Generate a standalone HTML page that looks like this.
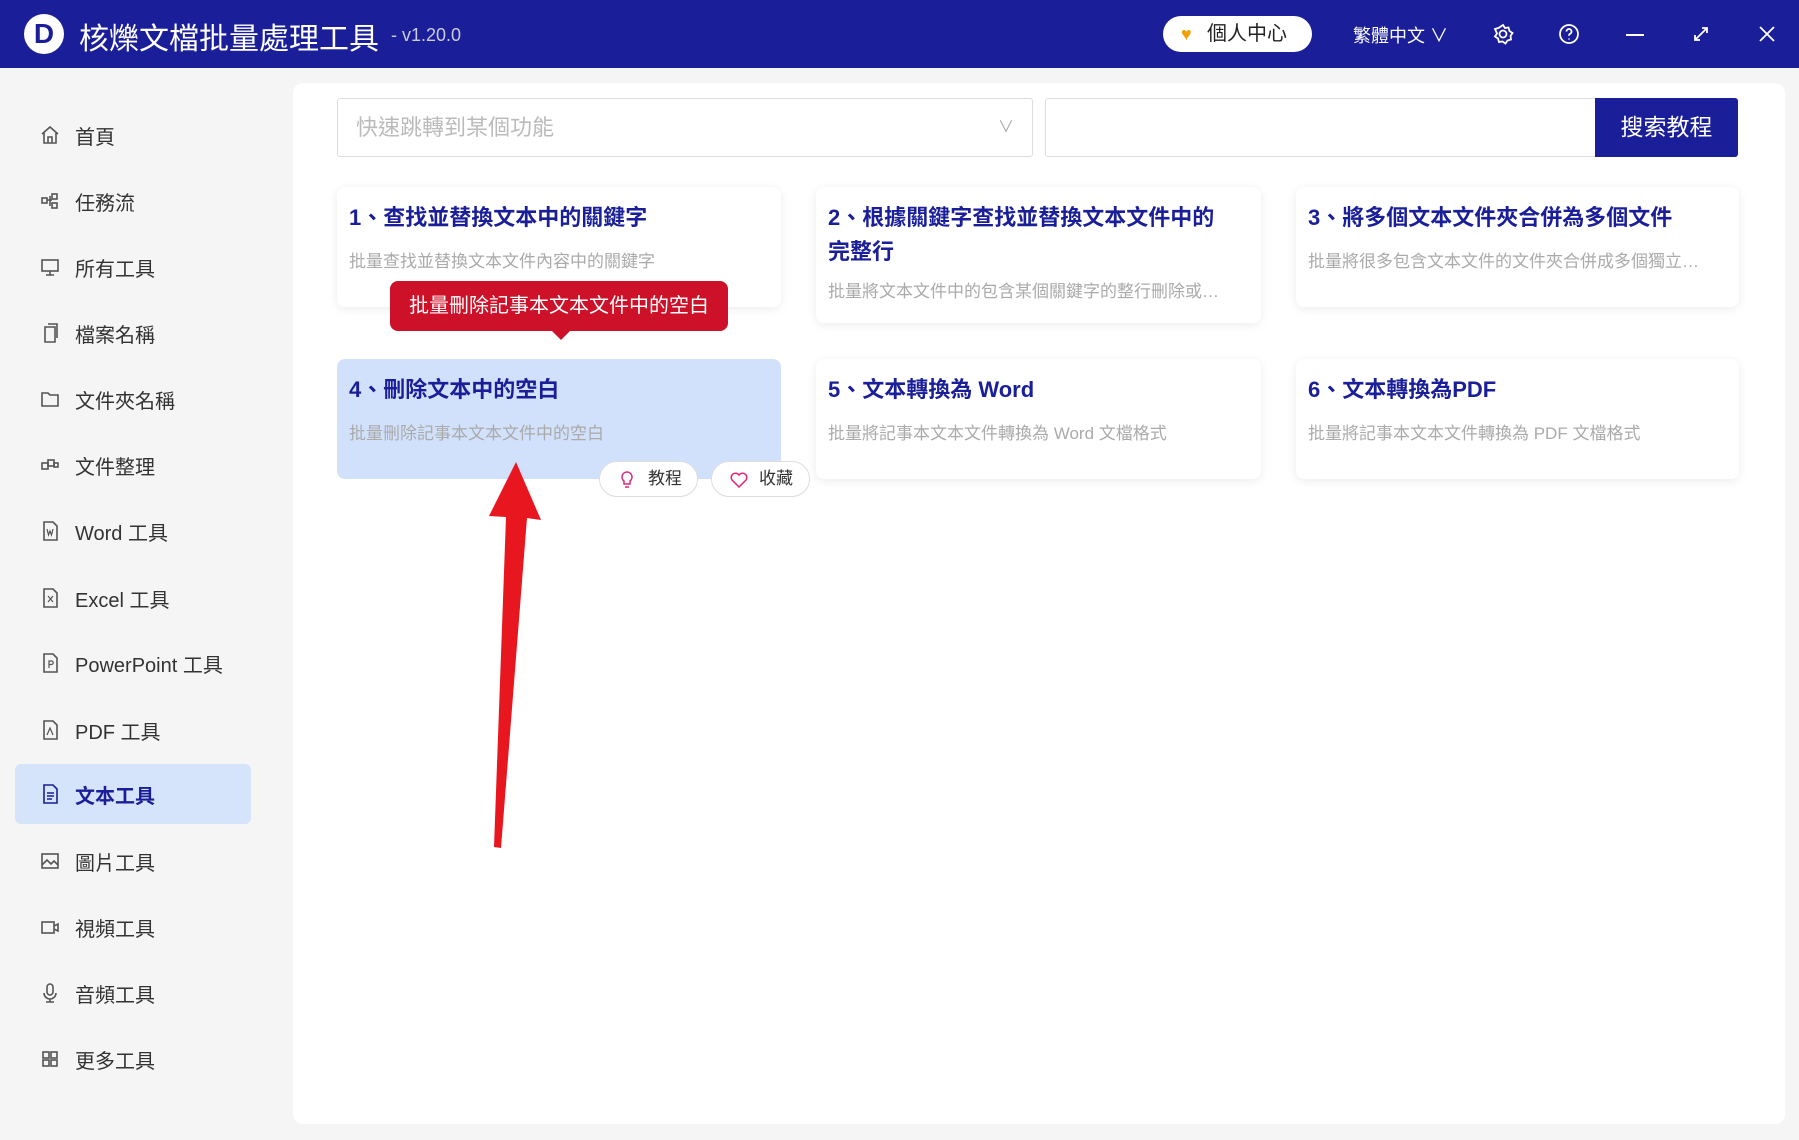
<!DOCTYPE html>
<html><head><meta charset="utf-8"><style>
*{margin:0;padding:0;box-sizing:border-box}
body{width:1799px;height:1140px;overflow:hidden;background:#f5f5f5;font-family:"Liberation Sans","Noto Sans CJK TC",sans-serif;position:relative}
.hdr{position:absolute;left:0;top:0;width:1799px;height:68px;background:#1a1e98;color:#fff}
.abs{position:absolute}
.side div.it{position:absolute;left:15px;width:236px;height:60px;display:flex;align-items:center;font-size:20px;color:#333}
.side div.it svg{position:absolute;left:24px}
.side div.it span{position:absolute;left:60px}
.panel{position:absolute;left:293px;top:83px;width:1492px;height:1041px;background:#fff;border-radius:10px}
.card{position:absolute;background:#fff;border-radius:8px;box-shadow:0 2px 10px rgba(0,0,0,.08);padding:14px 24px 14px 12px}
.card h3{font-size:22px;color:#1a1e98;font-weight:bold;line-height:34px}
.card p{font-size:17px;color:#aaa;margin-top:12px;white-space:nowrap;overflow:hidden;text-overflow:ellipsis}
</style></head><body>
<div class="hdr">
 <div class="abs" style="left:24px;top:14px;width:40px;height:40px;border-radius:50%;background:#fff;color:#1a1e98;font-weight:bold;font-size:28px;text-align:center;line-height:40px">D</div>
 <div class="abs" style="left:79px;top:14px;font-size:30px">核爍文檔批量處理工具</div>
 <div class="abs" style="left:391px;top:25px;font-size:18px;color:#ccd">- v1.20.0</div>
 <div class="abs" style="left:1163px;top:16px;width:149px;height:36px;border-radius:18px;background:#fff;color:#222;font-size:20px;line-height:36px;padding-left:44px"><span style="position:absolute;left:18px;color:#f0a000;font-size:18px">♥</span>個人中心</div>
 <div class="abs" style="left:1353px;top:22px;font-size:18px">繁體中文 ∨</div>
 <svg class="abs" style="left:1492px;top:23px" width="22" height="22" viewBox="0 0 22 22" fill="none" stroke="#fff" stroke-width="1.8"><circle cx="11" cy="11" r="3.5"/><path d="M11 2l2 3 3.5-.5 1 3.5 3 2-2 3 .5 3.5-3.5 1-2 3-3-2-3.5.5-1-3.5-3-2 2-3L3 6l3.5-1z"/></svg>
 <svg class="abs" style="left:1558px;top:23px" width="22" height="22" viewBox="0 0 22 22" fill="none" stroke="#fff" stroke-width="1.8"><circle cx="11" cy="11" r="9"/><path d="M8.5 8.5a2.5 2.5 0 1 1 3.5 2.3c-.8.4-1 1-1 2M11 15.5v1"/></svg>
 <div class="abs" style="left:1626px;top:34px;width:18px;height:2px;background:#fff"></div>
 <svg class="abs" style="left:1692px;top:25px" width="18" height="18" viewBox="0 0 18 18" stroke="#fff" stroke-width="1.8" fill="none"><path d="M3 15l12-12M10 3h5v5M3 10v5h5"/></svg>
 <svg class="abs" style="left:1758px;top:25px" width="18" height="18" viewBox="0 0 18 18" stroke="#fff" stroke-width="1.8"><path d="M2 2l14 14M16 2L2 16"/></svg>
</div>
<div class="side">
 <div class="it" style="top:105px"><svg width="22" height="22" viewBox="0 0 22 22" fill="none" stroke="#555" stroke-width="1.6"><path d="M3 10l8-7 8 7M5 8v11h12V8M9 19v-6h4v6"/></svg><span>首頁</span></div>
 <div class="it" style="top:171px"><svg width="22" height="22" viewBox="0 0 22 22" fill="none" stroke="#555" stroke-width="1.6"><rect x="3" y="8" width="5" height="5"/><rect x="13" y="4" width="5" height="5"/><rect x="13" y="13" width="5" height="5"/><path d="M8 10h5M11 6v10"/></svg><span>任務流</span></div>
 <div class="it" style="top:237px"><svg width="22" height="22" viewBox="0 0 22 22" fill="none" stroke="#555" stroke-width="1.6"><rect x="3" y="4" width="16" height="11"/><path d="M11 15v4M7 19h8"/></svg><span>所有工具</span></div>
 <div class="it" style="top:303px"><svg width="22" height="22" viewBox="0 0 22 22" fill="none" stroke="#555" stroke-width="1.6"><path d="M6 5h10v15H6zM9 2h9v14"/></svg><span>檔案名稱</span></div>
 <div class="it" style="top:369px"><svg width="22" height="22" viewBox="0 0 22 22" fill="none" stroke="#555" stroke-width="1.6"><path d="M3 5h6l2 2h8v11H3z"/></svg><span>文件夾名稱</span></div>
 <div class="it" style="top:435px"><svg width="22" height="22" viewBox="0 0 22 22" fill="none" stroke="#555" stroke-width="1.6"><rect x="3" y="9" width="6" height="6"/><rect x="9" y="6" width="6" height="6"/><rect x="15" y="9" width="4" height="4"/></svg><span>文件整理</span></div>
 <div class="it" style="top:501px"><svg width="22" height="22" viewBox="0 0 22 22" fill="none" stroke="#555" stroke-width="1.6"><path d="M5 2h9l4 4v14H5z"/><path d="M8 9l1.5 6 1.5-4 1.5 4 1.5-6" stroke-width="1.2"/></svg><span>Word 工具</span></div>
 <div class="it" style="top:568px"><svg width="22" height="22" viewBox="0 0 22 22" fill="none" stroke="#555" stroke-width="1.6"><path d="M5 2h9l4 4v14H5z"/><path d="M9 9l5 6M14 9l-5 6" stroke-width="1.2"/></svg><span>Excel 工具</span></div>
 <div class="it" style="top:633px"><svg width="22" height="22" viewBox="0 0 22 22" fill="none" stroke="#555" stroke-width="1.6"><path d="M5 2h9l4 4v14H5z"/><path d="M10 16V9h2.5a1.7 1.7 0 0 1 0 3.5H10" stroke-width="1.2"/></svg><span>PowerPoint 工具</span></div>
 <div class="it" style="top:700px"><svg width="22" height="22" viewBox="0 0 22 22" fill="none" stroke="#555" stroke-width="1.6"><path d="M5 2h9l4 4v14H5z"/><path d="M8 16l3-7 3 7" stroke-width="1.2"/></svg><span>PDF 工具</span></div>
 <div class="it" style="top:764px;background:#d5e3fb;border-radius:6px;color:#1a1e98;font-weight:bold"><svg width="22" height="22" viewBox="0 0 22 22" fill="none" stroke="#1a1e98" stroke-width="1.6"><path d="M5 2h9l4 4v14H5z"/><path d="M8 10h7M8 13h7M8 16h5"/></svg><span>文本工具</span></div>
 <div class="it" style="top:831px"><svg width="22" height="22" viewBox="0 0 22 22" fill="none" stroke="#555" stroke-width="1.6"><rect x="3" y="4" width="16" height="14"/><path d="M3 15l5-5 4 4 3-3 4 4"/></svg><span>圖片工具</span></div>
 <div class="it" style="top:897px"><svg width="22" height="22" viewBox="0 0 22 22" fill="none" stroke="#555" stroke-width="1.6"><rect x="3" y="6" width="12" height="11"/><path d="M15 10l4-2v7l-4-2"/></svg><span>視頻工具</span></div>
 <div class="it" style="top:963px"><svg width="22" height="22" viewBox="0 0 22 22" fill="none" stroke="#555" stroke-width="1.6"><rect x="8" y="2" width="6" height="11" rx="3"/><path d="M5 11a6 6 0 0 0 12 0M11 17v3M7 20h8"/></svg><span>音頻工具</span></div>
 <div class="it" style="top:1029px"><svg width="22" height="22" viewBox="0 0 22 22" fill="none" stroke="#555" stroke-width="1.6"><rect x="4" y="4" width="6" height="6"/><rect x="12" y="4" width="6" height="6"/><rect x="4" y="12" width="6" height="6"/><rect x="12" y="12" width="6" height="6"/></svg><span>更多工具</span></div>
</div>
<div class="panel"></div>
<div class="abs" style="left:337px;top:98px;width:696px;height:59px;border:1px solid #ddd;border-radius:3px;font-size:22px;color:#bbb;line-height:57px;padding-left:18px">快速跳轉到某個功能<span style="position:absolute;right:18px;color:#aaa;font-size:16px">∨</span></div>
<div class="abs" style="left:1045px;top:98px;width:552px;height:59px;border:1px solid #ddd;border-radius:3px 0 0 3px"></div>
<div class="abs" style="left:1595px;top:98px;width:143px;height:59px;background:#1a1e98;color:#fff;font-size:23px;text-align:center;line-height:59px;border-radius:0 3px 3px 0">搜索教程</div>

<div class="card" style="left:337px;top:187px;width:444px;height:120px"><h3>1、查找並替換文本中的關鍵字</h3><p>批量查找並替換文本文件內容中的關鍵字</p></div>
<div class="card" style="left:816px;top:187px;width:445px;height:136px;padding-right:30px"><h3>2、根據關鍵字查找並替換文本文件中的完整行</h3><p style="margin-top:8px">批量將文本文件中的包含某個關鍵字的整行刪除或替換</p></div>
<div class="card" style="left:1296px;top:187px;width:443px;height:120px"><h3>3、將多個文本文件夾合併為多個文件</h3><p>批量將很多包含文本文件的文件夾合併成多個獨立文件</p></div>
<div class="card" style="left:337px;top:359px;width:444px;height:120px;background:#d2e1fb;box-shadow:none"><h3>4、刪除文本中的空白</h3><p>批量刪除記事本文本文件中的空白</p></div>
<div class="card" style="left:816px;top:359px;width:445px;height:120px"><h3>5、文本轉換為 Word</h3><p>批量將記事本文本文件轉換為 Word 文檔格式</p></div>
<div class="card" style="left:1296px;top:359px;width:443px;height:120px"><h3>6、文本轉換為PDF</h3><p>批量將記事本文本文件轉換為 PDF 文檔格式</p></div>

<div class="abs" style="left:390px;top:281px;width:338px;height:50px;background:#cc1128;border-radius:8px;color:#fff;font-size:20px;text-align:center;line-height:50px">批量刪除記事本文本文件中的空白</div>
<div class="abs" style="left:550px;top:329px;width:0;height:0;border-left:11px solid transparent;border-right:11px solid transparent;border-top:11px solid #cc1128"></div>

<div class="abs" style="left:599px;top:461px;width:99px;height:36px;background:#fff;border:1px solid #ddd;border-radius:18px;font-size:17px;line-height:34px;padding-left:48px;color:#333">教程<svg style="position:absolute;left:20px;top:9px" width="14" height="18" viewBox="0 0 14 18" fill="none" stroke="#e0247a" stroke-width="1.5"><path d="M7 1a5 5 0 0 0-3 9v3h6v-3a5 5 0 0 0-3-9zM5 16h4"/></svg></div>
<div class="abs" style="left:711px;top:461px;width:99px;height:36px;background:#fff;border:1px solid #ddd;border-radius:18px;font-size:17px;line-height:34px;padding-left:47px;color:#333">收藏<svg style="position:absolute;left:18px;top:10px" width="18" height="16" viewBox="0 0 18 16" fill="none" stroke="#e0247a" stroke-width="1.5"><path d="M9 15L2 8a4 4 0 0 1 7-5 4 4 0 0 1 7 5z"/></svg></div>

<svg class="abs" style="left:0;top:0" width="1799" height="1140"><polygon points="516,462 541,520 527,518 501,848 494,847 506,517 489,516" fill="#e8161f"/></svg>
</body></html>
